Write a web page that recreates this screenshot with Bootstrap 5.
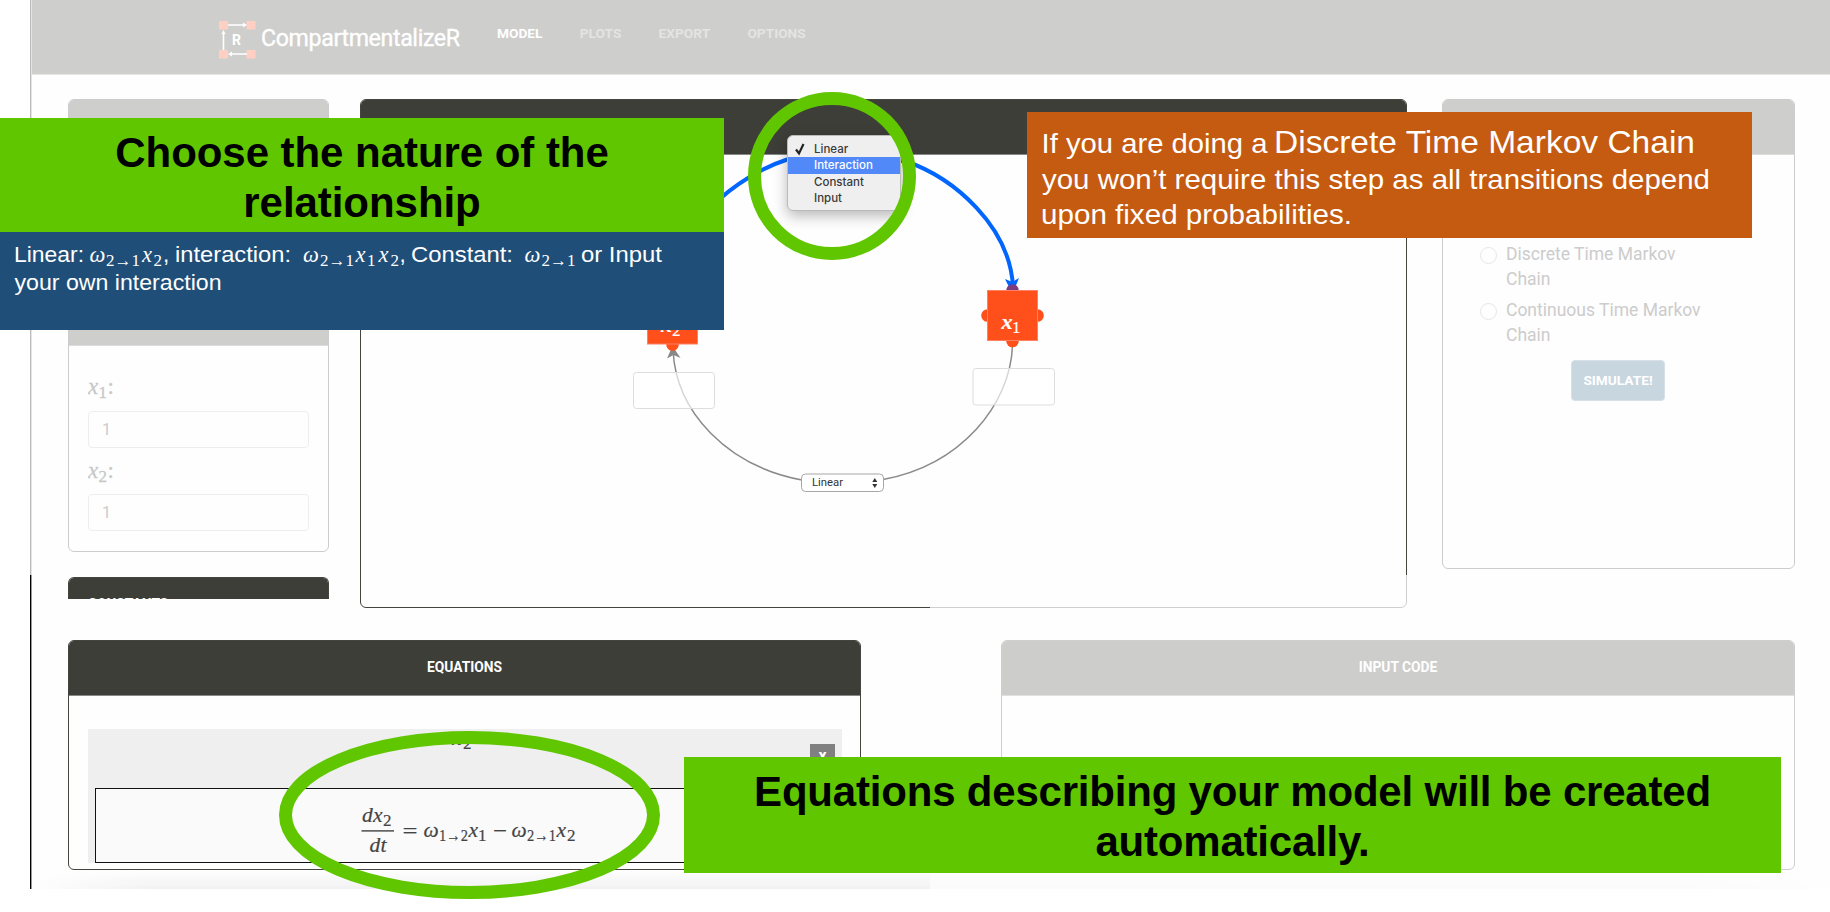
<!DOCTYPE html>
<html lang="en">
<head>
<meta charset="utf-8">
<title>CompartmentalizeR</title>
<link href="https://cdn.jsdelivr.net/npm/bootstrap@5.3.0/dist/css/bootstrap.min.css" rel="stylesheet">
<script src="https://cdn.jsdelivr.net/npm/bootstrap@5.3.0/dist/js/bootstrap.bundle.min.js"></script>
<style>
body{font-family:Roboto,"Liberation Sans",sans-serif;background:#fff;width:1830px;height:912px;overflow:hidden}
.stage{width:1830px;height:912px;overflow:hidden}
.edge{width:2px;margin-left:30px;height:889px;background:linear-gradient(90deg,#bbb 50%,#e4e4e4 50%) top/2px 575px no-repeat,linear-gradient(90deg,#000 50%,#999 50%)}
.app{width:1798px;height:889px;background:#fefefe}
.topbar{height:75px;background:#cececc;border-bottom:1px solid #e6e6e5;padding:0 0 0 187px}
.topbar .navbar-brand{font-size:23.2px;color:#fff;padding:0;letter-spacing:-.38px;-webkit-text-stroke:.35px #fff;width:200px;white-space:nowrap}
.topbar .nav-link{font-weight:700;font-size:13.7px;line-height:20px;color:#e4e4e2;padding:0}
.topbar .nav-link.active{color:#fff}
.panel{border:1px solid #ccc;border-radius:6px;background:#fefefe;overflow:hidden}
.panel .card-header{height:55px;background:#cececc;border:0;border-bottom:1px solid #dcdcda;border-radius:0;color:#fff;font-weight:700;font-size:13.8px;line-height:20px;padding:16px 0 0;text-align:center}
.dark{border-color:#44443f}
.dark .card-header{background:#3e3e39;border-bottom-color:#888}
.vals label{height:46px;display:block}
.vals .form-control{height:37px;border:1px solid #eee;border-radius:4px;padding:0 13px;font-size:16px;color:#ccc;background:#fefefe}
.choice{font-size:17.5px;line-height:24.7px;color:#ccc;gap:9px;white-space:nowrap}
.choice .dot{width:17px;height:17px;border:1px solid #e6e6e6;border-radius:50%;margin-top:5px;flex:none}
.simulate{width:94px;height:41px;background:#c8d6df;border:1px solid #d6e0e6;color:#fff;font-weight:700;font-size:13.7px;padding:0 0 1px;border-radius:4px}
.eqlist{background:#efefef;height:134px;width:754px;margin:33px 0 0 19px;padding:15px 7px 0 7px}
.eqbox{height:75px;border:1.5px solid #111;background:#fafafa;margin-top:16px}
.closer{width:25px;height:28px;background:#808080;color:#fff;font-weight:700;font-size:16px;line-height:24px;text-align:center}
.foot{left:32px;top:871px;width:1798px;height:18px;background:linear-gradient(#fefefe00,#f1f1f1);-webkit-mask-image:linear-gradient(90deg,transparent,#000 120px,#000 1640px,transparent)}
.veil{left:930px;top:575px;width:900px;height:314px;background:rgba(254,254,254,.75)}
.layer{left:0;top:0}
.mth{font-family:"Liberation Serif",serif}
.it{font-style:italic}
.banner{background:#60c600;color:#000;font:700 42px/50px "Liberation Sans",sans-serif;text-align:center;white-space:nowrap;letter-spacing:-.05px}
.b1{left:0;top:118px;width:724px;height:114px;padding-top:10px}
.b2{left:684px;top:757px;width:1097px;height:116px;padding-top:10px;letter-spacing:-.2px}
.info{left:0;top:232px;width:724px;height:98px;background:#1f4e78}
.warn{left:1027px;top:112px;width:725px;height:126px;background:#c55a11}
.popup{left:787px;top:135px;width:114px;height:76px;background:#efeff0;border:1px solid #bbb;border-radius:6px;padding:5px 0;box-shadow:0 5px 14px rgba(0,0,0,.28);font:500 11.5px/16.8px Inter,sans-serif;color:#3a3a3a}
.popup div{padding-left:26px;height:16.3px}
.popup .on{background:#5289f8;color:#fff}
</style>
</head>
<body>
<div class="stage position-relative">
  <div class="d-flex">
    <div class="edge"></div>
    <div class="app">
      <nav class="topbar d-flex align-items-start">
        <svg width="37" height="38" viewBox="0 0 37 38" style="margin-top:21px">
          <g fill="#ffcfc3"><path d="M0 0h9v8.500H0zM27.500 0h9v8.500h-9zM0 29h9v8.500H0zM27.500 29h9v8.500h-9z"/></g>
          <g stroke="#fff" stroke-width="1.600" fill="#fff"><path d="M9 4h15M13 33h15M4.500 13v16" fill="none"/><path stroke="none" d="M28 4l-4-2.500v5zM9 33l4-2.500v5zM4.500 9L2.500 13h4z"/></g>
          <text x="13" y="24" fill="#fff" font-size="14" font-weight="700">R</text>
        </svg>
        <span class="navbar-brand" style="margin:21px 0 0 5px;line-height:34px">CompartmentalizeR</span>
        <div class="nav" style="margin:23px 0 0 36px;gap:37.3px">
          <a class="nav-link active">MODEL</a><a class="nav-link">PLOTS</a><a class="nav-link">EXPORT</a><a class="nav-link">OPTIONS</a>
        </div>
      </nav>
      <div class="d-flex align-items-start" style="padding:24px 0 0 36px;height:541px">
        <div style="width:261px">
          <div class="card panel" style="height:453px">
            <div class="card-header" style="height:246px"></div>
            <div class="vals" style="padding:19px 19px 0">
              <label><svg width="60" height="46"><g class="mth" fill="#c8c8c8" stroke="#c8c8c8" stroke-width=".3"><text x="0" y="29" class="it" font-size="23">x</text><text x="10.500" y="33" font-size="17">1</text><text x="19.500" y="29" font-size="23">:</text></g></svg></label>
              <input class="form-control" value="1">
              <label><svg width="60" height="46"><g class="mth" fill="#c8c8c8" stroke="#c8c8c8" stroke-width=".3"><text x="0" y="30" class="it" font-size="23">x</text><text x="10.500" y="34" font-size="17">2</text><text x="19.500" y="30" font-size="23">:</text></g></svg></label>
              <input class="form-control" value="1">
            </div>
          </div>
          <div class="panel dark" style="height:22px;margin-top:25px;border-bottom:0;border-radius:6px 6px 0 0"><div class="card-header text-start" style="padding:16px 0 0 19px">CONSTANTS</div></div>
        </div>
        <div class="card panel dark" style="width:1047px;height:509px;margin-left:31px"><div class="card-header"></div></div>
        <div class="card panel" style="width:353px;height:470px;margin-left:35px">
          <div class="card-header"></div>
          <div style="padding:87px 0 0 37px">
            <div class="choice d-flex"><span class="dot"></span><span>Discrete Time Markov<br>Chain</span></div>
            <div class="choice d-flex" style="margin-top:7px"><span class="dot"></span><span>Continuous Time Markov<br>Chain</span></div>
            <button class="btn simulate" style="margin:12px 0 0 91px">SIMULATE!</button>
          </div>
        </div>
      </div>
      <div class="d-flex" style="padding:24px 0 0 36px">
        <div class="card panel dark" style="width:793px;height:230px">
          <div class="card-header">EQUATIONS</div>
          <div class="eqlist"><div class="d-flex justify-content-end"><div class="closer">x</div></div><div class="eqbox"></div></div>
        </div>
        <div class="card panel dark" style="width:794px;height:230px;margin-left:140px"><div class="card-header">INPUT CODE</div></div>
      </div>
    </div>
  </div>
  <div class="foot position-absolute"></div>
  <div class="veil position-absolute"></div>

  <!-- model graph and equation -->
  <svg class="layer position-absolute" width="1830" height="912">
    <g fill="none" stroke="#8a8a8a" stroke-width="1.500">
      <path d="M673 350C676 412 727 466 802 480M1012.500 346C1010 405 961 465 883 479.500"/>
    </g>
    <path d="M672.500 346L680.500 358L673.500 355L667 358.500z" fill="#888"/>
    <path d="M1013 287C1010 227 955 178 905 161L790 158.500C735 176 675 227 672 287" fill="none" stroke="#06f" stroke-width="4"/>
    <path d="M1012.500 294L1019 278L1012.500 282L1005 279z" fill="#06f"/>
    <circle cx="1012.500" cy="290.500" r="6.300" fill="#7d3c7f"/>
    <g fill="#ff4f1b"><circle cx="987.500" cy="315.500" r="6.300"/><circle cx="1037.500" cy="315.500" r="6.300"/><circle cx="1012.500" cy="341" r="6.300"/><circle cx="672.500" cy="344.500" r="6.300"/>
      <g stroke="#ff8062"><rect x="987.500" y="290.500" width="50" height="50"/><rect x="647.500" y="294.500" width="50" height="49.500"/></g></g>
    <g class="mth" fill="#fff" stroke="#fff" stroke-width=".2"><text x="1001.500" y="329" class="it" font-size="22" font-weight="700">x</text><text x="1012" y="332.500" font-size="17">1</text><text x="661" y="332" class="it" font-size="22" font-weight="700">x</text><text x="672" y="335.500" font-size="17">2</text></g>
    <g fill="#fff" fill-opacity=".65" stroke="#ddd"><rect x="633.500" y="372.500" width="81" height="36" rx="3"/><rect x="973" y="368.500" width="81.500" height="36.500" rx="3"/></g>
    <rect x="801.500" y="474" width="82" height="17.500" rx="4" fill="#fff" stroke="#a6a6a6"/>
    <text x="812" y="486" font-size="11.500" fill="#333" textLength="31" lengthAdjust="spacingAndGlyphs">Linear</text>
    <path d="M872.300 482h5l-2.500-4zM872.300 484h5l-2.500 4z" fill="#333"/>
    <g class="mth" fill="#444" font-size="21.500" stroke="#444" stroke-width=".2">
      <g class="it"><text x="362" y="822">d</text><text x="373" y="822">x</text><text x="369.500" y="852">d</text><text x="380.500" y="852">t</text><text x="423.500" y="836.500">ω</text><text x="468.500" y="836.500">x</text><text x="511.500" y="836.500">ω</text><text x="556.500" y="836.500">x</text><text x="452" y="745">x</text></g>
      <path d="M361.500 830h32.500v1.800h-32.500z" fill="#666" stroke="none"/>
      <text x="402.500" y="837.500" textLength="15" lengthAdjust="spacingAndGlyphs">=</text><text x="493" y="837.500" textLength="14" lengthAdjust="spacingAndGlyphs">−</text>
      <g font-size="17"><text x="383" y="825.500">2</text><text x="439" y="840.500" textLength="29" lengthAdjust="spacingAndGlyphs">1→2</text><text x="478" y="840.500">1</text><text x="527" y="840.500" textLength="29" lengthAdjust="spacingAndGlyphs">2→1</text><text x="567" y="840.500">2</text><text x="463" y="749">2</text></g>
    </g>
  </svg>

  <div class="popup position-absolute"><div>Linear</div><div class="on">Interaction</div><div>Constant</div><div>Input</div></div>
  <svg class="layer position-absolute" width="1830" height="912">
    <path d="M796 149.500L799 153.500L803.500 144" fill="none" stroke="#222" stroke-width="2.200"/>
    <g fill="none" stroke="#60c600" stroke-width="13"><circle cx="832" cy="176" r="77.500"/><ellipse cx="469.500" cy="815" rx="184" ry="77.500"/></g>
  </svg>

  <div class="banner b1 position-absolute">Choose the nature of the<br>relationship</div>
  <div class="banner b2 position-absolute">Equations describing your model will be created<br>automatically.</div>
  <div class="info position-absolute">
    <svg width="724" height="98" fill="#fff" font-family="Liberation Sans" font-size="22.500">
      <text x="14" y="30" textLength="70" lengthAdjust="spacingAndGlyphs">Linear:</text><text x="175" y="30" textLength="116" lengthAdjust="spacingAndGlyphs">interaction:</text><text x="411" y="30" textLength="102" lengthAdjust="spacingAndGlyphs">Constant:</text><text x="581" y="30" textLength="81" lengthAdjust="spacingAndGlyphs">or Input</text>
      <text x="163" y="30">,</text><text x="399.500" y="30">,</text>
      <text x="14.500" y="58" textLength="207" lengthAdjust="spacingAndGlyphs">your own interaction</text>
      <g class="mth it" font-size="22.500"><text x="89.500" y="30">ω</text><text x="142" y="30">x</text><text x="303" y="30">ω</text><text x="355.500" y="30">x</text><text x="378.500" y="30">x</text><text x="524.500" y="30">ω</text></g>
      <g class="mth" font-size="17"><text x="106" y="34" textLength="34" lengthAdjust="spacingAndGlyphs">2→1</text><text x="153.500" y="34">2</text><text x="320" y="34" textLength="34" lengthAdjust="spacingAndGlyphs">2→1</text><text x="367" y="34">1</text><text x="390.500" y="34">2</text><text x="541.500" y="34" textLength="34" lengthAdjust="spacingAndGlyphs">2→1</text></g>
    </svg>
  </div>
  <div class="warn position-absolute">
    <svg width="725" height="126" fill="#fff" font-family="Liberation Sans" font-size="28">
      <text x="14.500" y="41" textLength="226" lengthAdjust="spacingAndGlyphs">If you are doing a</text><text x="247" y="41" font-size="31.500" textLength="421" lengthAdjust="spacingAndGlyphs">Discrete Time Markov Chain</text>
      <text x="15" y="77" textLength="668" lengthAdjust="spacingAndGlyphs">you won’t require this step as all transitions depend</text>
      <text x="14" y="112" textLength="311" lengthAdjust="spacingAndGlyphs">upon fixed probabilities.</text>
    </svg>
  </div>
</div>
</body>
</html>
